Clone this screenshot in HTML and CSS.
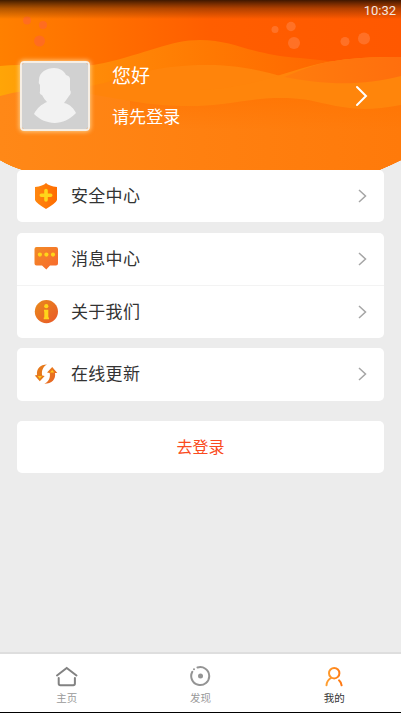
FILE: index.html
```html
<!DOCTYPE html>
<html lang="zh-CN">
<head>
<meta charset="utf-8">
<meta name="viewport" content="width=device-width, initial-scale=1">
<title>我的</title>
<link rel="stylesheet" href="styles.css">
</head>
<body>
<div class="app">
  <header class="hero">
    <svg class="hero-art" viewBox="0 0 401 170" aria-hidden="true">
      <defs>
        <linearGradient id="sky"><stop offset="0" stop-color="#ff8000"/><stop offset=".52" stop-color="#ff5e00"/><stop offset="1" stop-color="#ff5800"/></linearGradient>
        <linearGradient id="back"><stop offset="0" stop-color="#ffa507"/><stop offset=".22" stop-color="#ff8c08"/><stop offset=".52" stop-color="#ff7902"/><stop offset=".9" stop-color="#ff6200"/></linearGradient>
        <linearGradient id="right" gradientUnits="userSpaceOnUse" x1="280" y1="0" x2="401" y2="0"><stop offset="0" stop-color="#ff7d0d"/><stop offset="1" stop-color="#ff6f0d"/></linearGradient>
        <linearGradient id="mid"><stop offset="0" stop-color="#ff850b"/><stop offset="1" stop-color="#ff810a"/></linearGradient>
        <linearGradient id="front"><stop offset="0" stop-color="#ff8817"/><stop offset=".5" stop-color="#ff8010"/><stop offset="1" stop-color="#ff7a0a"/></linearGradient>
        <linearGradient id="crest" x2="0" y2="1"><stop offset="0" stop-color="#ff7200" stop-opacity=".6"/><stop offset="1" stop-color="#ff7200" stop-opacity="0"/></linearGradient>
        <linearGradient id="shade" x2="0" y2="1"><stop offset="0" stop-color="#200c00" stop-opacity=".86"/><stop offset=".45" stop-color="#401800" stop-opacity=".4"/><stop offset="1" stop-color="#401800" stop-opacity="0"/></linearGradient>
        <clipPath id="bowl"><path d="M0 0H401V160Q391 165 379 170H23Q10 166 0 160Z"/></clipPath>
      </defs>
      <g clip-path="url(#bowl)">
        <path fill="url(#sky)" d="M0 0H401V170H0Z"/>
        <path fill="url(#back)" d="M0 66C35 62 65 72 104 63C145 54 170 40 200 40C235 40 250 55 300 58C340 62 370 66 401 75V170H0Z"/>
        <path fill="#ff840b" d="M0 97C45 87 75 91 104 83C145 70 170 64 215 65C245 66 265 72 284 77L300 110V170H0Z"/>
        <path fill="#ff850b" d="M200 90C255 88 290 69 328 62C350 58 370 57 401 57V170H200Z"/>
        <path fill="url(#right)" d="M284 77C297 72 312 65 328 62C350 58 370 57 401 57V76C360 87 320 84 284 77Z"/>
        <path fill="url(#front)" d="M0 96C50 82 90 95 130 101C210 114 235 98 280 98C320 98 325 108 365 109Q380 109 401 105V170H0Z"/>
        <path fill="url(#crest)" d="M130 101C210 114 235 98 280 98C320 98 325 108 365 109Q380 109 401 105V130H130Z"/>
        <g fill="#ff6040" opacity=".5"><circle cx="27" cy="20.500" r="4"/><circle cx="43" cy="25" r="4"/><circle cx="39.500" cy="41" r="5.500"/></g>
        <g fill="#ff9460" opacity=".4"><circle cx="275" cy="29.500" r="3.500"/><circle cx="291" cy="26.500" r="4.700"/><circle cx="294" cy="43" r="6"/><circle cx="345" cy="41.500" r="4.500"/><circle cx="364" cy="38.500" r="6"/></g>
        <path fill="url(#shade)" d="M0 0H401V19H0Z"/>
      </g>
    </svg>
    <div class="status">10:32</div>
    <div class="profile">
      <svg class="avatar" viewBox="0 0 66 66" aria-hidden="true">
        <path fill="#d1d1d1" d="M0 0H66V66H0Z"/>
        <path fill="#f2f2f2" d="M17 17C17 9 25 5 32 5C38 5 42 8 44 12Q48 13 48 16V27Q50 30 47 33Q45 36 42 40C48 41 52 46 54 50C42 63 24 63 12 51C15 45 20 41 25 39Q22 36 20 32Q17 31 18 28V22Q16 20 17 17Z"/>
      </svg>
      <div class="greeting">
        <div class="hello">您好</div>
        <div class="hint">请先登录</div>
      </div>
      <svg class="go" viewBox="0 0 14 22" aria-hidden="true"><path d="M2 2L11 11L2 20"/></svg>
    </div>
  </header>

  <main class="content">
    <section class="card">
      <div class="row">
        <svg class="icon" viewBox="0 0 24 26"><defs><linearGradient id="sh"><stop offset="0" stop-color="#ff8710"/><stop offset="1" stop-color="#ff6c00"/></linearGradient></defs><path fill="url(#sh)" d="M12 0Q15 3 23 4V17Q22 20 12 26Q2 20 1 17V4Q9 3 12 0Z"/><path d="M12 7.500V17M7.300 12.300H16.700" stroke="#ffd51a" stroke-width="3.600" stroke-linecap="round"/></svg>
        <span class="label">安全中心</span>
        <svg class="chev" viewBox="0 0 9 14"><path d="M1 1L7.500 7L1 13"/></svg>
      </div>
    </section>
    <section class="card">
      <div class="row">
        <svg class="icon" viewBox="0 0 24 26"><defs><linearGradient id="ms" x2="1" y2="1"><stop offset="0" stop-color="#f28a25"/><stop offset="1" stop-color="#f8692f"/></linearGradient></defs><path fill="url(#ms)" d="M2.500 1H22Q24 1 24 3V17.500Q24 19.500 22 19.500H16L12.300 23.500L8 19.500H2.500Q.5 19.500 .5 17.500V3Q.5 1 2.500 1Z"/><g fill="#ffd51a"><circle cx="5.900" cy="8.600" r="2.100"/><circle cx="12.400" cy="8.600" r="2.100"/><circle cx="19" cy="8.600" r="2.100"/></g></svg>
        <span class="label">消息中心</span>
        <svg class="chev" viewBox="0 0 9 14"><path d="M1 1L7.500 7L1 13"/></svg>
      </div>
      <div class="row">
        <svg class="icon" viewBox="0 0 24 26"><defs><linearGradient id="inf" x2="1" y2="1"><stop offset="0" stop-color="#e98b1b"/><stop offset="1" stop-color="#e9572a"/></linearGradient></defs><circle cx="12.400" cy="12.600" r="11.600" fill="url(#inf)"/><circle cx="12.300" cy="7.200" r="2.100" fill="#ffd51a"/><path fill="#ffd51a" d="M10 10.700H14.300V18.500H15V20.300H9.700V18.500H10.300V12.500H10Z"/></svg>
        <span class="label">关于我们</span>
        <svg class="chev" viewBox="0 0 9 14"><path d="M1 1L7.500 7L1 13"/></svg>
      </div>
    </section>
    <section class="card">
      <div class="row">
        <svg class="icon" viewBox="0 0 24 26"><defs><linearGradient id="up" x2="1" y2="1"><stop offset="0" stop-color="#eb8516"/><stop offset="1" stop-color="#e55e29"/></linearGradient></defs><path fill="#e6791c" d="M13 3.500C6 3.500 2.300 8 3 14L.8 14.500L5.800 20.200L10.700 15L8.200 14.500C7.200 9.500 9.300 5.500 13 3.500Z"/><path fill="url(#up)" d="M10.300 22.800C18 22.800 22 18 21 12L23.300 12L18.200 6L13 11.500L15.700 12C16.700 16.500 14.500 21 10.300 22.800Z"/><path fill="#ffc81a" d="M3.700 15H8L5.800 17.700ZM16 11.600L18.200 9L20.300 11.600Z"/></svg>
        <span class="label">在线更新</span>
        <svg class="chev" viewBox="0 0 9 14"><path d="M1 1L7.500 7L1 13"/></svg>
      </div>
    </section>
    <button class="card login">去登录</button>
  </main>

  <nav class="tabs">
    <div class="tab">
      <svg class="tab-icon" viewBox="0 0 24 22"><path d="M2 9.500L11.700 2L21.500 9.500M3.700 12V17.500Q3.700 19.200 5.400 19.200H18.200Q19.900 19.200 19.900 17.500V12" stroke="#828282"/></svg>
      <span>主页</span>
    </div>
    <div class="tab">
      <svg class="tab-icon" viewBox="0 0 24 22"><path d="M9.500 1.500A9 9 0 1 1 4.300 5.800" stroke="#949494"/><circle cx="6" cy="3.200" r="1" fill="#949494"/><circle cx="12.500" cy="10" r="2.500" fill="#949494"/></svg>
      <span>发现</span>
    </div>
    <div class="tab active">
      <svg class="tab-icon" viewBox="0 0 24 22"><defs><linearGradient id="me" gradientUnits="userSpaceOnUse" x1="3" x2="20"><stop offset="0" stop-color="#ffa333"/><stop offset="1" stop-color="#ff7610"/></linearGradient></defs><circle cx="12.200" cy="7.200" r="5.200" stroke="url(#me)"/><path d="M9 12Q4.700 14.500 4.500 19.300M17 14.300Q19.200 16.300 19.600 19.300" stroke="url(#me)"/></svg>
      <span>我的</span>
    </div>
  </nav>
</div>
</body>
</html>
```

FILE: styles.css
```css
* { box-sizing: border-box; }

body {
  margin: 0;
  background: #ececec;
  color: #333;
  font-family: "Noto Sans CJK SC", sans-serif;
}

svg { display: block; fill: none; }

.app {
  display: flex;
  flex-direction: column;
  height: 713px;
  overflow: hidden;
}

.hero {
  position: relative;
  flex: none;
  height: 169.500px;
  color: #fff;
}

.hero-art {
  position: absolute;
  inset: 0;
  width: 100%;
  height: 170px;
}

.status {
  position: relative;
  height: 22px;
  padding-right: 5px;
  color: #f5e9e2;
  font: 13px/22px Roboto, sans-serif;
  text-align: right;
}

.profile {
  position: relative;
  display: flex;
  align-items: flex-start;
  height: 147px;
  padding: 40px 32px 0 20px;
}

.avatar {
  width: 70px;
  height: 70px;
  margin-top: -1px;
  border: 2px solid #f6eee4;
  border-radius: 4px;
  box-shadow: 0 0 4px 1px rgba(255, 225, 165, .75);
}

.greeting { margin: -1px 0 0 22px; }
.hello { height: 28px; font-size: 19px; line-height: 28px; }
.hint { height: 26px; margin-top: 14px; font-size: 17px; line-height: 26px; letter-spacing: .1px; }

.go {
  width: 14px;
  height: 22px;
  margin: 23px 0 0 auto;
  stroke: #fff;
  stroke-width: 2;
  stroke-linecap: round;
}

.content {
  flex: 1;
  padding: 0 17px;
}

.card {
  margin-bottom: 10.500px;
  background: #fff;
  border-radius: 5px;
}

.row {
  display: flex;
  align-items: center;
  height: 52.500px;
  padding: 0 17px;
}

.row + .row { border-top: 1px solid #f3f3f3; }

.icon { width: 24px; height: 26px; }
.label { margin: -2px 0 0 13px; font-size: 17px; line-height: 26px; letter-spacing: .3px; }

.chev {
  width: 9px;
  height: 14px;
  margin-left: auto;
  stroke: #a5a5a5;
  stroke-width: 1.500;
}

.login {
  display: block;
  width: 100%;
  height: 52px;
  margin: 20px 0 0;
  padding: 0;
  border: 0;
  color: #fa4b20;
  font: 16px/51px "Noto Sans CJK SC", sans-serif;
}

.tabs {
  display: grid;
  grid-template-columns: repeat(3, 1fr);
  height: 61px;
  background: #fff;
  border-top: 2px solid #dedede;
  border-bottom: 1px solid #000;
}

.tab {
  display: flex;
  flex-direction: column;
  align-items: center;
  padding-top: 12px;
  color: #999;
  font-size: 10.500px;
  line-height: 16px;
}

.tab-icon { width: 24px; height: 22px; margin-bottom: 2px; stroke-width: 2; stroke-linecap: round; }
.active { color: #333; }
```
